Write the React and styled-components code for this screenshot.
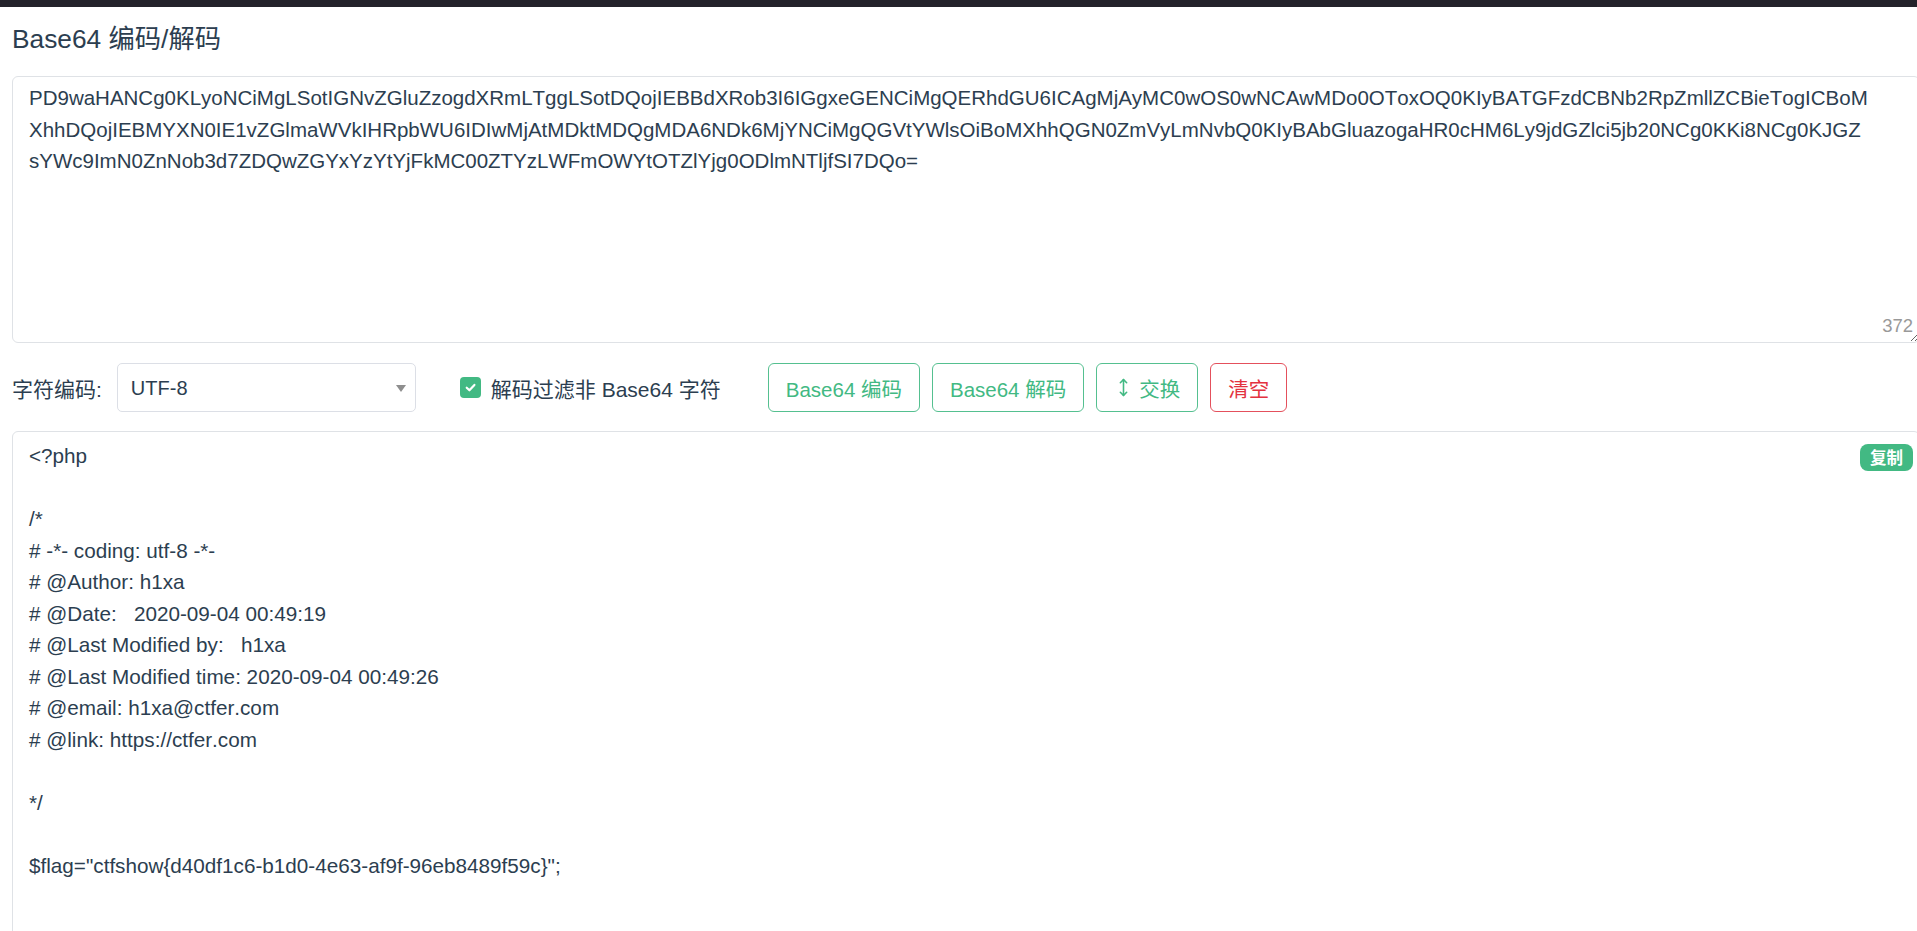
import React from 'react';
import styled, { createGlobalStyle } from 'styled-components';
import { MoveVertical } from 'lucide-react';

const FONT = `"Liberation Sans", Arial, "Noto Sans CJK SC", sans-serif`;
const GREEN = '#42b983';
const INK = '#2c3e50';

// decoded php file, CRLF line endings like the original upload
const SOURCE = [
  '<?php',
  '',
  '/*',
  '# -*- coding: utf-8 -*-',
  '# @Author: h1xa',
  '# @Date:   2020-09-04 00:49:19',
  '# @Last Modified by:   h1xa',
  '# @Last Modified time: 2020-09-04 00:49:26',
  '# @email: h1xa@ctfer.com',
  '# @link: https://ctfer.com',
  '',
  '*/',
  '',
  '$flag="ctfshow{d40df1c6-b1d0-4e63-af9f-96eb8489f59c}";',
  '',
].join('\r\n');

const ENCODED = btoa(SOURCE);

const GlobalStyle = createGlobalStyle`
  html, body {
    margin: 0;
    padding: 0;
    overflow: hidden;
    background: #fff;
  }
  body {
    font-family: ${FONT};
    color: ${INK};
  }
`;

const TopBar = styled.div`
  height: 7px;
  background: #23222a;
`;

const Page = styled.main`
  padding-left: 12px;
  width: 1908px;
`;

const Title = styled.h1`
  margin: 17px 0 0;
  font-size: 26.3px;
  line-height: 31px;
  font-weight: 400;
  color: ${INK};
`;

const InputWrap = styled.div`
  position: relative;
  margin-top: 21px;
`;

const Input = styled.textarea`
  display: block;
  box-sizing: border-box;
  width: 1908px;
  height: 267px;
  margin: 0;
  padding: 5px 49px 5px 16px;
  border: 1px solid #dfe2e6;
  border-radius: 6px;
  font-family: ${FONT};
  font-size: 20.5px;
  line-height: 31.5px;
  font-kerning: none;
  color: ${INK};
  background: #fff;
  resize: both;
  outline: none;
  overflow: hidden;
`;

const Counter = styled.span`
  position: absolute;
  right: 7px;
  bottom: 8px;
  font-size: 18.5px;
  line-height: 18px;
  color: #999;
`;

const Controls = styled.div`
  display: flex;
  align-items: center;
  height: 49px;
  margin-top: 20px;
`;

const FieldLabel = styled.label`
  font-size: 21px;
  margin-right: 15px;
`;

const SelectBox = styled.div`
  position: relative;
  width: 299px;
  height: 49px;
`;

const Select = styled.select`
  appearance: none;
  box-sizing: border-box;
  width: 100%;
  height: 100%;
  padding: 0 30px 0 13px;
  border: 1px solid #dcdfe6;
  border-radius: 5px;
  background: #fff;
  font-family: ${FONT};
  font-size: 20px;
  color: ${INK};
  outline: none;
`;

const Caret = styled.span`
  position: absolute;
  right: 10px;
  top: 50%;
  margin-top: -3px;
  border-left: 5.5px solid transparent;
  border-right: 5.5px solid transparent;
  border-top: 7px solid #8e8e8e;
  pointer-events: none;
`;

const CheckLabel = styled.label`
  display: flex;
  align-items: center;
  gap: 10px;
  margin-left: 44px;
  font-size: 21px;
`;

const CheckBox = styled.span`
  display: flex;
  align-items: center;
  justify-content: center;
  width: 21px;
  height: 21px;
  border-radius: 4px;
  background: ${GREEN};
`;

const ButtonGroup = styled.div`
  display: flex;
  gap: 12px;
  margin-left: 47px;
`;

const Button = styled.button`
  display: inline-flex;
  align-items: center;
  gap: 6px;
  box-sizing: border-box;
  height: 49px;
  padding: 0 17px;
  border: 1px solid ${(p) => (p.$danger ? '#e4505c' : '#55c090')};
  border-radius: 6px;
  background: #fff;
  color: ${(p) => (p.$danger ? '#e3323f' : GREEN)};
  font-family: ${FONT};
  font-size: 20.5px;
  cursor: pointer;
`;

const Output = styled.div`
  position: relative;
  box-sizing: border-box;
  width: 1908px;
  min-height: 600px;
  margin-top: 19px;
  padding: 8px 16px;
  border: 1px solid #dfe2e6;
  border-radius: 6px;
  white-space: pre-wrap;
  font-size: 20.7px;
  line-height: 31.5px;
  font-kerning: none;
`;

const CopyBadge = styled.span`
  position: absolute;
  top: 12px;
  right: 6px;
  height: 27px;
  padding: 0 10px;
  border-radius: 8px;
  background: ${GREEN};
  color: #fff;
  font-family: "Noto Sans CJK SC", sans-serif;
  font-size: 16.5px;
  font-weight: 700;
  line-height: 27px;
`;

export default function App() {
  return (
    <>
      <GlobalStyle />
      <TopBar />
      <Page>
        <Title>Base64 编码/解码</Title>

        <InputWrap>
          <Input defaultValue={ENCODED} spellCheck={false} />
          <Counter>{ENCODED.length}</Counter>
        </InputWrap>

        <Controls>
          <FieldLabel>字符编码:</FieldLabel>
          <SelectBox>
            <Select defaultValue="UTF-8">
              <option>UTF-8</option>
              <option>GBK</option>
            </Select>
            <Caret />
          </SelectBox>

          <CheckLabel>
            <CheckBox>
              <svg width="13" height="13" viewBox="0 0 12 12" fill="none">
                <path d="M2.5 6.2 5 8.6 9.6 3.6" stroke="#fff" strokeWidth="2" strokeLinecap="round" strokeLinejoin="round" />
              </svg>
            </CheckBox>
            解码过滤非 Base64 字符
          </CheckLabel>

          <ButtonGroup>
            <Button>Base64 编码</Button>
            <Button>Base64 解码</Button>
            <Button>
              <MoveVertical size={19} strokeWidth={2} />
              交换
            </Button>
            <Button $danger>清空</Button>
          </ButtonGroup>
        </Controls>

        <Output>
          {SOURCE.replace(/\r/g, '')}
          <CopyBadge>复制</CopyBadge>
        </Output>
      </Page>
    </>
  );
}
